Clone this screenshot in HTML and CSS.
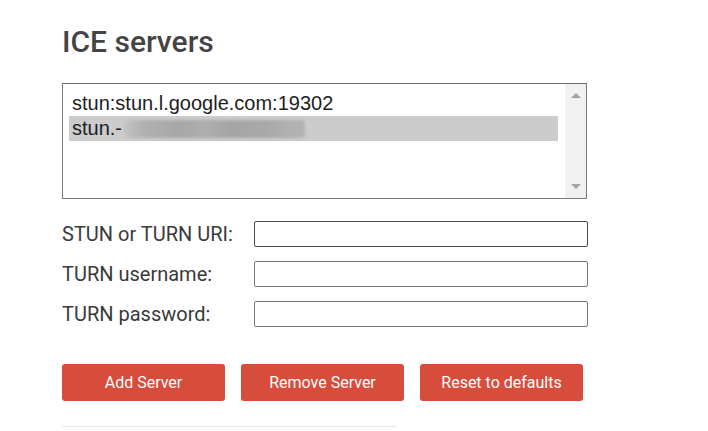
FILE: index.html
```html
<!DOCTYPE html>
<html lang="en">
<head>
<meta charset="utf-8">
<title>ICE servers</title>
<link rel="stylesheet" href="styles.css">
</head>
<body>
<main class="page">
  <h2 class="title">ICE servers</h2>
  <div class="listbox">
    <div class="options">
      <div class="option">stun:stun.l.google.com:19302</div>
      <div class="option selected">stun.-<span class="redact"></span></div>
    </div>
    <div class="scrollbar">
      <span class="arrow up"></span>
      <span class="arrow down"></span>
    </div>
  </div>
  <div class="form">
    <div class="row"><label class="label">STUN or TURN URI:</label><input class="field dark" type="text"></div>
    <div class="row"><label class="label">TURN username:</label><input class="field" type="text"></div>
    <div class="row"><label class="label">TURN password:</label><input class="field" type="password"></div>
  </div>
  <div class="buttons">
    <button class="btn">Add Server</button>
    <button class="btn">Remove Server</button>
    <button class="btn">Reset to defaults</button>
  </div>
  <hr class="rule">
</main>
</body>
</html>
```

FILE: styles.css
```css
html, body {
  margin: 0;
  padding: 0;
  background: #fff;
}
.page {
  padding: 24px 0 0 62px;
  font-family: Roboto, "Liberation Sans", sans-serif;
}
.title {
  margin: 0;
  font-size: 30px;
  line-height: 35px;
  font-weight: 500;
  color: #444;
}
.listbox {
  margin-top: 24px;
  width: 523px;
  height: 114px;
  border: 1px solid #7a7a7a;
  border-top-color: #6a6a6a;
  display: flex;
}
.options {
  flex: 1;
  padding: 7px 7px 0 6px;
  font-family: "Liberation Sans", Arial, sans-serif;
  font-size: 20px;
  color: #1e1e1e;
}
.option {
  padding: 1px 3px;
  line-height: 23px;
  white-space: nowrap;
  display: flex;
  align-items: center;
}
.option.selected {
  background: #cccccc;
}
.redact {
  display: inline-block;
  width: 182px;
  height: 18px;
  margin-left: 1px;
  background: linear-gradient(90deg, #c4c4c4 0%, #b0b0b0 12%, #a7a7a7 30%, #aeaeae 45%, #a4a4a4 60%, #aaaaaa 80%, #b4b4b4 100%);
  filter: blur(1.5px);
  border-radius: 8px 3px 3px 8px;
}
.scrollbar {
  width: 21px;
  background: #f1f1f1;
  display: flex;
  flex-direction: column;
  justify-content: space-between;
  align-items: center;
  padding: 9px 0 9px;
  box-sizing: border-box;
}
.arrow {
  width: 0;
  height: 0;
  border-left: 5px solid transparent;
  border-right: 5px solid transparent;
}
.arrow.up {
  border-bottom: 5px solid #a3a3a3;
}
.arrow.down {
  border-top: 5px solid #a3a3a3;
}
.form {
  margin-top: 22px;
  display: flex;
  flex-direction: column;
  gap: 14px;
}
.row {
  display: flex;
  align-items: center;
}
.label {
  width: 192px;
  font-size: 20px;
  color: #3a3a3a;
}
.field {
  width: 334px;
  height: 26px;
  box-sizing: border-box;
  margin: 0;
  border: 1px solid #777;
  border-radius: 2px;
  padding: 2px 4px;
  font-size: 16px;
  background: #fff;
}
.field.dark {
  border-color: #4a4a4a;
}
.buttons {
  margin-top: 37px;
  display: flex;
  gap: 16px;
}
.btn {
  width: 163px;
  height: 37px;
  border: 0;
  border-radius: 3px;
  background: #d84c3b;
  color: #fff;
  font-family: Roboto, "Liberation Sans", sans-serif;
  font-size: 16px;
  padding: 0;
}
.rule {
  margin: 25px 0 0;
  width: 335px;
  border: 0;
  border-top: 1px solid #e6e6e6;
  height: 0;
}
```
